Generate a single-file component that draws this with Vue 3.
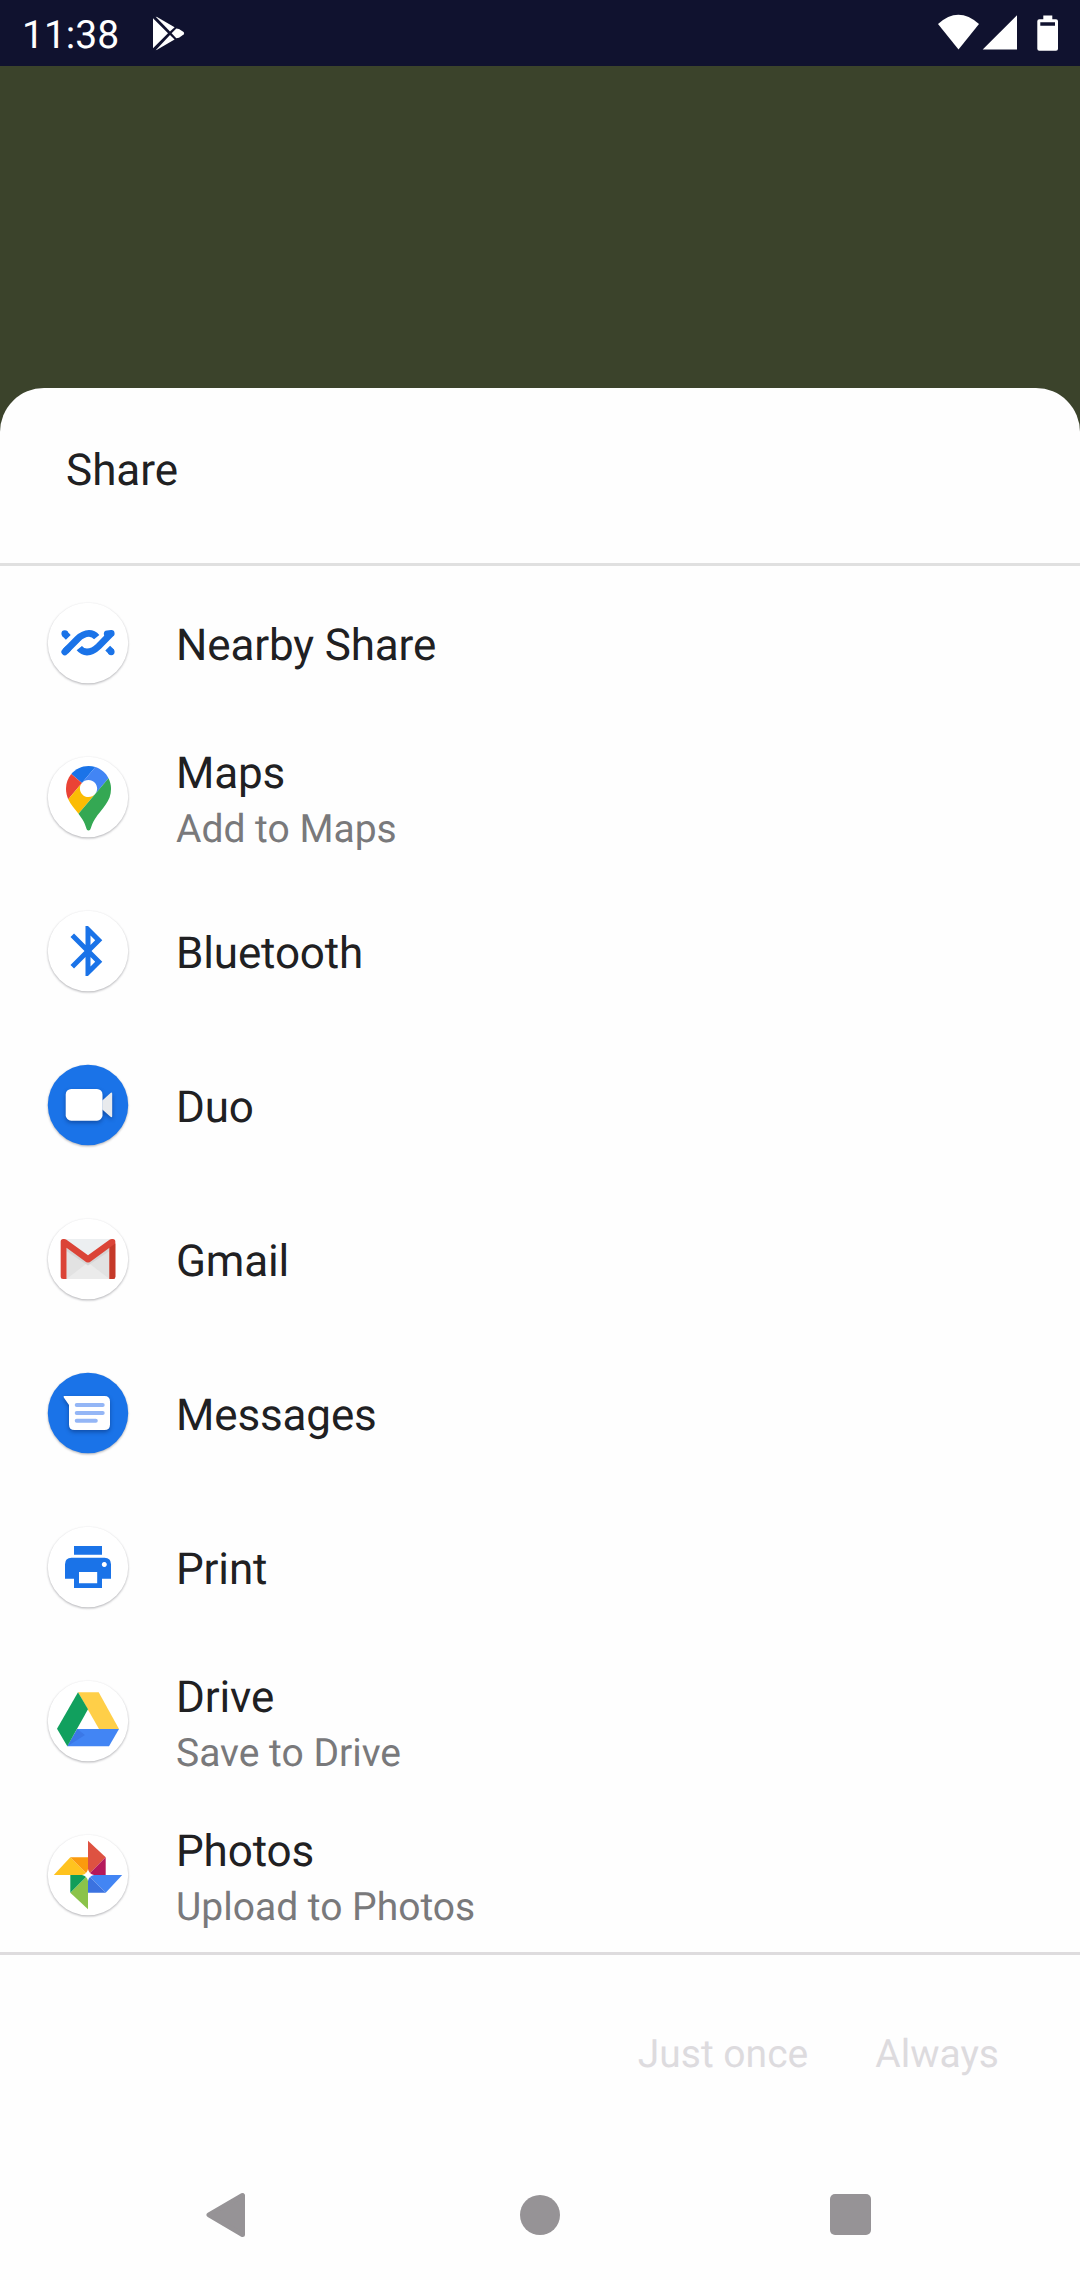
<script setup>
const targets = [
  { id: 'nearby', title: 'Nearby Share' },
  { id: 'maps', title: 'Maps', note: 'Add to Maps' },
  { id: 'bluetooth', title: 'Bluetooth' },
  { id: 'duo', title: 'Duo', filled: true },
  { id: 'gmail', title: 'Gmail' },
  { id: 'messages', title: 'Messages', filled: true },
  { id: 'print', title: 'Print' },
  { id: 'drive', title: 'Drive', note: 'Save to Drive' },
  { id: 'photos', title: 'Photos', note: 'Upload to Photos' },
]
</script>

<template>
  <div class="screen">
    <header class="status">
      <span class="clock">11:38</span>
      <svg class="play" width="34" height="36" viewBox="0 0 34 36" fill="#fff">
        <path d="M1 2.2V32.2L16 17.3z" />
        <path d="M3.7.7 5 .9 22.600 11.2 18 15.6z" />
        <path d="M3.7 34.2 5 33.800 22.600 23.400 18 19z" />
        <path d="M19.600 17.300 24.300 12.400 27 12.900 31.600 16.100Q32.700 17.300 31.600 18.400L27 21.700 24.300 22.200z" />
      </svg>
      <svg class="signals" width="124" height="38" viewBox="0 0 124 38" fill="#fff">
        <path d="M1 10Q21.300-8.500 42 10L21.500 35.500z" />
        <path d="M45.700 35.500H80V1.300z" />
        <path fill-rule="evenodd" d="M106.300 1.500h9v3.700h3.700q2 0 2 2V34.700q0 2-2 2h-16.700q-2 0-2-2V7.200q0-2 2-2h4zM103.300 8.300v3.400h14.700V8.300z" />
      </svg>
    </header>

    <main class="sheet">
      <h1 class="heading">Share</h1>
      <ul class="targets">
        <li v-for="t in targets" :key="t.id" class="target">
          <svg class="icon" width="88" height="88" viewBox="-44 -44 88 88">
            <circle class="disc" :class="{ filled: t.filled }" r="40.2" />

            <g v-if="t.id === 'nearby'" fill="none" stroke="#1a73e8" stroke-width="6.800">
              <path d="M-22.500 8.200-10.500-4C-5-9.300-2-9.600 1-9.600 4.500-9.600 6.500-8.500 8.700-5.800" />
              <path d="M22.500-8.800 10.500 3.400C5 8.700 2 9-1 9-4.500 9-6.500 7.900-8.700 5.200" />
              <path d="M-23.500-9.500-19.700-5.700M23.500 8.900 19.700 5.100" />
              <path stroke-linecap="round" d="M-23.200-9.400h.01M23.200 8.800h.01M-23.200 8.900-20 5.700M23.200-9.500-20-6.300" stroke-dasharray="4 200" />
            </g>

            <g v-else-if="t.id === 'maps'" transform="translate(-22 -31) scale(.4875)">
              <path fill="#1a73e8" d="M60.200 2.200C55.800.8 51 0 46.100 0 32 0 19.300 6.400 10.800 16.500l21.800 18.300z" />
              <path fill="#ea4335" d="M10.800 16.500C4.100 24.500 0 34.900 0 46.100c0 8.700 1.700 15.700 4.600 22l28-33.300z" />
              <path fill="#4285f4" d="M46.200 28.500c9.800 0 17.700 7.900 17.700 17.700 0 4.300-1.600 8.300-4.200 11.400 0 0 13.900-16.600 27.500-32.700-5.600-10.800-15.300-19-27-22.700L32.600 34.800c3.300-3.800 8.100-6.300 13.600-6.300" />
              <path fill="#fbbc04" d="M46.200 63.800c-9.800 0-17.700-7.900-17.700-17.700 0-4.300 1.500-8.300 4.100-11.300l-28 33.300c4.800 10.600 12.800 19.200 21 29.900l34.100-40.500c-3.300 3.900-8.100 6.300-13.500 6.300" />
              <path fill="#34a853" d="M59.100 109.200c15.400-24.100 33.300-35 33.300-63 0-7.700-1.900-14.900-5.200-21.300L25.600 98c2.600 3.400 5.300 7.300 7.900 11.300 9.400 14.500 6.800 23.100 12.800 23.100s3.400-8.700 12.800-23.200" />
            </g>

            <path v-else-if="t.id === 'bluetooth'" fill="#1a73e8" transform="translate(-30 -30) scale(2.500)" d="M17.710 7.710 12 2h-1v7.590L6.410 5 5 6.410 10.590 12 5 17.590 6.410 19 11 14.410V22h1l5.710-5.710-4.300-4.290 4.300-4.290zM13 5.830l1.880 1.880L13 9.590V5.830zm1.880 10.460L13 18.170v-3.760l1.880 1.880z" />

            <g v-else-if="t.id === 'duo'" class="raised">
              <path fill="#e8eaed" d="M14.300-4.500 22.500-12Q24.200-13.200 24.200-11V10.700Q24.200 13 22.500 11.800L14.300 4.500z" />
              <rect x="-22.300" y="-16" width="36.800" height="31.700" rx="5.500" fill="#fff" />
            </g>

            <g v-else-if="t.id === 'gmail'">
              <rect x="-27.300" y="-20" width="54.600" height="40" rx="2.500" fill="#eceff1" />
              <path fill="#e2e2e2" d="M-21.500-13 0 3.500 21.500-13V20h-43z" />
              <path fill="#ebebeb" d="M-21.500 20 0 3.500 21.500 20z" />
              <path fill="#d5d5d5" d="M-21.500-11.500 0 4 21.500-11.500V-8L0 6.500-21.500-8z" />
              <path fill="#db4437" d="M-27.300-17.500Q-27.300-20-24.800-20H-24Q-22.500-20-21.500-19.200L0-3.800 21.500-19.200Q22.500-20 24-20H24.800Q27.300-20 27.300-17.500V17.500Q27.300 20 24.800 20H21.500V-11.300L2 3Q0 4.200-2 3L-21.500-11.300V20H-24.800Q-27.300 20-27.300 17.500z" />
              <path fill="#c53929" d="M21.500-11.300 27.300-15.500V17.500Q27.300 20 24.800 20H21.500z" />
            </g>

            <g v-else-if="t.id === 'messages'">
              <path class="raised" fill="#fff" d="M-23.500-17H16.500Q22-17 22-11.500V11.500Q22 17 16.500 17H-13.500Q-19 17-19 11.500V-8L-24.200-15.600Q-25-17-23.500-17z" />
              <path fill="none" stroke="#94b6f6" stroke-width="4" stroke-linecap="round" d="M-11.300-8H14.700M-11.300 0H14.700M-11.300 7.700H7.800" />
            </g>

            <path v-else-if="t.id === 'print'" fill="#1a73e8" fill-rule="evenodd" d="M-14-21H14V-12.300H-14zM-16.500-9.300H16.500Q23-9.300 23-2.800V11.700H14V21H-14V11.700H-23V-2.800Q-23-9.300-16.500-9.300zM-9 5V16.300H9.200V5zM16.300-5a2.500 2.500 0 1 0 .01 0z" />

            <g v-else-if="t.id === 'drive'">
              <path fill="#4285f4" d="M-10.700 8H31L21 25.300H-20.700z" />
              <path fill="#3b78e7" d="M-10.700 8-3 14-20.700 25.300z" />
              <path fill="#ffcf48" d="M-10-28.700H10.700L31 8H11z" />
              <path fill="#11a05e" d="M-10-28.700 0-11.700-20.700 25.300-31 7.700z" />
            </g>

            <g v-else-if="t.id === 'photos'">
              <path fill="#ffc31f" d="M-34.200 0-17.700-17.700 0 0z" />
              <path fill="#fb9a0e" d="M-17.700-17.700H0V0z" />
              <path fill="#de5241" d="M0-34.300 17.700-17.700 0 0z" />
              <path fill="#b5195b" d="M17.700-17.700V0H0z" />
              <path fill="#4285f4" d="M34.200 0 17.700 17.700 0 0z" />
              <path fill="#3b72e0" d="M17.700 17.700H0V0z" />
              <path fill="#8bc34a" d="M0 34.200-17.700 17.700 0 0z" />
              <path fill="#109d59" d="M-17.700 17.700V0H0z" />
              <path fill="#fff" d="M0-6Q1-1 6 0 1 1 0 6-1 1-6 0-1-1 0-6z" />
            </g>
          </svg>
          <div class="labels" :class="{ double: t.note }">
            <span class="title">{{ t.title }}</span>
            <span v-if="t.note" class="note">{{ t.note }}</span>
          </div>
        </li>
      </ul>
      <div class="actions">
        <span>Just once</span>
        <span>Always</span>
      </div>
      <nav class="nav">
        <svg width="40" height="46" viewBox="0 0 40 46">
          <path d="M3 22.800 36.500 3.500V42.500z" fill="#969396" stroke="#969396" stroke-width="5" stroke-linejoin="round" />
        </svg>
        <span class="home"></span>
        <span class="recents"></span>
      </nav>
    </main>
  </div>
</template>

<style>
body {
  margin: 0;
}
</style>

<style scoped>
.screen {
  display: flex;
  flex-direction: column;
  width: 1080px;
  height: 2280px;
  overflow: hidden;
  background: #3b432b;
  font-family: Roboto, "Noto Sans", sans-serif;
  text-rendering: geometricPrecision;
}
.status {
  display: flex;
  height: 66px;
  flex: none;
  margin-bottom: 322px;
  padding-left: 22px;
  background: #10122f;
}
.clock {
  width: 130px;
  color: #fff;
  font-size: 39px;
  line-height: 70px;
}
.play {
  margin-top: 16px;
}
.signals {
  margin: 14px 19px 0 auto;
}
.sheet {
  display: flex;
  flex: 1;
  flex-direction: column;
  border-radius: 44px 44px 0 0;
  background: #fefefe;
}
.heading {
  box-sizing: border-box;
  height: 178px;
  margin: 0;
  padding: 56px 66px 0;
  border-bottom: 3px solid #e0e0e0;
  color: #202022;
  font-size: 44px;
  font-weight: 400;
  line-height: 52px;
}
.targets {
  margin: 0;
  padding: 0;
  border-bottom: 3px solid #dedcde;
  list-style: none;
}
.target {
  display: flex;
  align-items: center;
  height: 154px;
  padding-left: 44px;
}
.icon {
  flex: none;
  margin-right: 44px;
  overflow: visible;
}
.disc {
  fill: #fff;
  filter: drop-shadow(0 1.3px 0.8px rgba(50, 50, 60, 0.38));
}
.disc.filled {
  fill: #1a73e8;
}
.raised {
  filter: drop-shadow(0 2px 2px rgba(0, 20, 70, 0.4));
}
.labels {
  display: flex;
  flex-direction: column;
  gap: 4px;
  padding-top: 4px;
}
.labels.double {
  padding-top: 8px;
}
.title {
  color: #202022;
  font-size: 44px;
  letter-spacing: -0.15px;
  line-height: 52px;
}
.note {
  color: #79797b;
  font-size: 39px;
  line-height: 52px;
}
.actions {
  display: flex;
  justify-content: flex-end;
  gap: 67px;
  height: 197px;
  padding-right: 81px;
  color: #dddbde;
  font-size: 39px;
  line-height: 199px;
}
.nav {
  display: flex;
  align-items: center;
  height: 125px;
  padding-left: 206px;
}
.home {
  width: 40px;
  height: 40px;
  margin-left: 274px;
  border-radius: 50%;
  background: #969396;
}
.recents {
  width: 41px;
  height: 41px;
  margin-left: 270px;
  border-radius: 5px;
  background: #969396;
}
</style>
